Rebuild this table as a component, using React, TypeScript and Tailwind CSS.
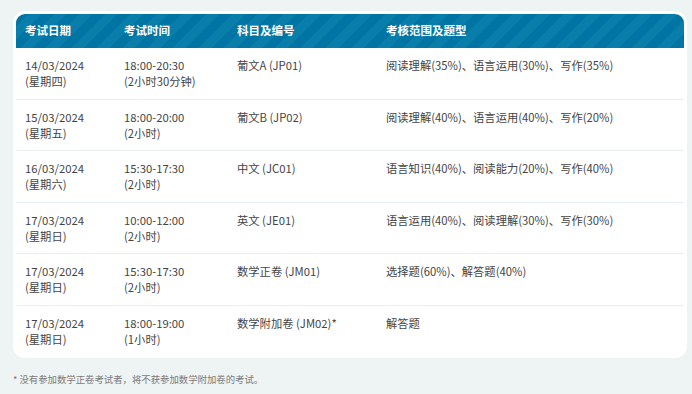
import React from 'react';

interface ExamRow {
  date: string;
  weekday: string;
  time: string;
  duration: string;
  subject: string;
  scope: string;
}

const rows: ExamRow[] = [
  { date: '14/03/2024', weekday: '(星期四)', time: '18:00-20:30', duration: '(2小时30分钟)', subject: '葡文A (JP01)', scope: '阅读理解(35%)、语言运用(30%)、写作(35%)' },
  { date: '15/03/2024', weekday: '(星期五)', time: '18:00-20:00', duration: '(2小时)', subject: '葡文B (JP02)', scope: '阅读理解(40%)、语言运用(40%)、写作(20%)' },
  { date: '16/03/2024', weekday: '(星期六)', time: '15:30-17:30', duration: '(2小时)', subject: '中文 (JC01)', scope: '语言知识(40%)、阅读能力(20%)、写作(40%)' },
  { date: '17/03/2024', weekday: '(星期日)', time: '10:00-12:00', duration: '(2小时)', subject: '英文 (JE01)', scope: '语言运用(40%)、阅读理解(30%)、写作(30%)' },
  { date: '17/03/2024', weekday: '(星期日)', time: '15:30-17:30', duration: '(2小时)', subject: '数学正卷 (JM01)', scope: '选择题(60%)、解答题(40%)' },
  { date: '17/03/2024', weekday: '(星期日)', time: '18:00-19:00', duration: '(1小时)', subject: '数学附加卷 (JM02)*', scope: '解答题' },
];

const cols = 'grid grid-cols-[99px_113px_149px_1fr]';

export default function App() {
  return (
    <div className="w-[692px] h-[394px] bg-[#eef3f3] px-[13px] pt-[11px] font-['Noto_Sans_CJK_SC','Noto_Sans',sans-serif]">
      {/* Schedule card */}
      <div className="bg-white rounded-[12px] p-[3px] pb-0 w-[674px] h-[347px] overflow-hidden">
        <div className={`${cols} h-[34px] items-center rounded-t-[9px] text-white text-[11.5px] font-bold bg-[repeating-linear-gradient(135deg,#0074a2_0px,#0074a2_9px,#0a7eab_9px,#0a7eab_18px)]`}>
          <div className="pl-[9px]">考试日期</div>
          <div className="pl-[9px]">考试时间</div>
          <div className="pl-[9px]">科目及编号</div>
          <div className="pl-[9px]">考核范围及题型</div>
        </div>
        {rows.map((r, i) => (
          <div
            key={i}
            className={`${cols} h-[51.6px] pt-[9px] text-[11.3px] leading-[16px] text-[#444] ${i < rows.length - 1 ? 'border-b border-[#e6eef4]' : ''}`}
          >
            <div className="pl-[9px]">
              <div>{r.date}</div>
              <div>{r.weekday}</div>
            </div>
            <div className="pl-[9px]">
              <div>{r.time}</div>
              <div>{r.duration}</div>
            </div>
            <div className="pl-[9px]">{r.subject}</div>
            <div className="pl-[9px]">{r.scope}</div>
          </div>
        ))}
      </div>
      <p className="mt-[14px] text-[9.4px] text-[#7a7a7a]">* 没有参加数学正卷考试者，将不获参加数学附加卷的考试。</p>
    </div>
  );
}
